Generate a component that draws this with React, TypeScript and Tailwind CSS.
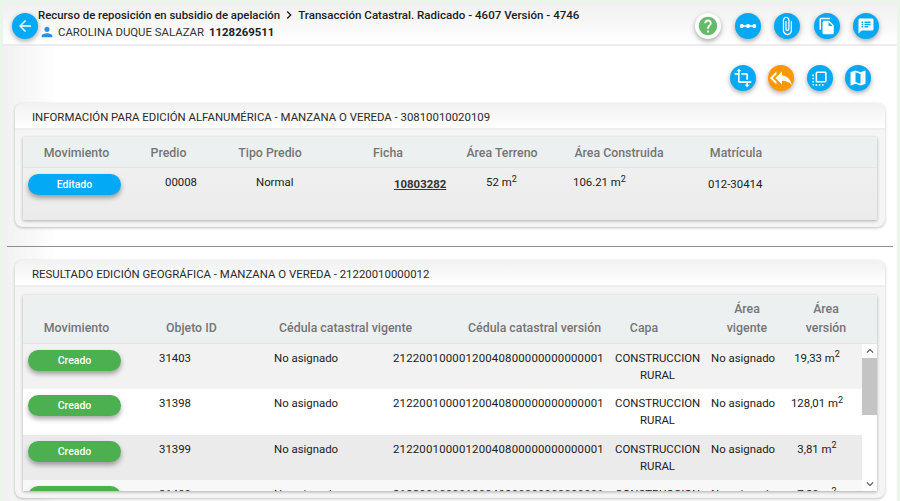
import { MdArrowBack, MdPerson, MdHelp, MdLinearScale, MdAttachFile, MdFileCopy, MdSpeakerNotes, MdTransform, MdReplyAll, MdFlipToFront, MdMap, MdKeyboardArrowUp, MdKeyboardArrowDown, MdChevronRight } from "react-icons/md";
import type { ReactNode } from "react";

function Fab({ children, color = "bg-[#03a9f4]", cls = "" }: { children: ReactNode; color?: string; cls?: string }) {
  return (
    <div className={`flex h-[26px] w-[26px] shrink-0 items-center justify-center rounded-full text-white shadow-[0_2px_5px_rgba(0,0,0,0.35)] ${color} ${cls}`}>
      {children}
    </div>
  );
}

function Badge({ label, color }: { label: string; color: string }) {
  return (
    <div className={`flex h-[21px] w-[93px] items-center justify-center rounded-full text-[10.5px] font-medium text-white shadow-[0_3px_5px_rgba(0,0,0,0.35)] ${color}`}>
      {label}
    </div>
  );
}

function M2({ v }: { v: string }) {
  return (
    <span>
      {v} m<sup className="text-[9px]">2</sup>
    </span>
  );
}

const rows = [
  { id: "31403", area: "19,33", bg: "bg-[#f2f2f2]" },
  { id: "31398", area: "128,01", bg: "bg-white" },
  { id: "31399", area: "3,81", bg: "bg-[#ebebeb]" },
  { id: "31400", area: "7,20", bg: "bg-[#f8f8f8]" },
];

export default function App() {
  return (
    <div className="h-[501px] w-[900px] overflow-hidden bg-[#eaf6ea] pl-[3px] pr-[3px] pt-[2px] font-['Roboto',sans-serif] text-[11.4px] text-[#212121]">
      <div className="h-[499px] rounded-t-[4px] bg-gradient-to-r from-[#f1f1f1] via-white via-[6%] to-white">
        {/* Top bar */}
        <div className="flex h-[44px] items-center border-b-2 border-[#ececec] bg-gradient-to-b from-[#f0f0f0] to-white pl-[9px] pr-[18px]">
          <Fab cls="mt-[5px]"><MdArrowBack size={18} /></Fab>
          <div className="ml-0 flex-1">
            <div className="mt-[1px] flex h-[14px] items-center font-medium leading-[14px] text-[#1c1c1c]">
              Recurso de reposición en subsidio de apelación
              <MdChevronRight size={16} className="mx-px" />
              <span className="text-[11.55px]">Transacción Catastral. Radicado - 4607 Versión - 4746</span>
            </div>
            <div className="mt-[3px] flex h-[14px] items-center pl-[1px] leading-[14px] text-[#333]">
              <MdPerson size={16} className="mr-[3px] text-[#2f8fdc]" />
              CAROLINA DUQUE SALAZAR
              <b className="ml-[5px] font-bold text-[#212121]">1128269511</b>
            </div>
          </div>
          <div className="mt-[6px] flex gap-[13.4px]">
            <Fab color="bg-white"><MdHelp size={22} className="text-[#66bb6a]" /></Fab>
            <Fab><MdLinearScale size={20} /></Fab>
            <Fab><MdAttachFile size={20} /></Fab>
            <Fab><MdFileCopy size={18} /></Fab>
            <Fab><MdSpeakerNotes size={18} /></Fab>
          </div>
        </div>

        {/* Second actions */}
        <div className="flex h-[57px] items-center justify-end gap-[12.5px] pr-[26px] pt-[7px]">
          <Fab><MdTransform size={20} /></Fab>
          <Fab color="bg-[#ff9800]"><MdReplyAll size={22} /></Fab>
          <Fab><MdFlipToFront size={19} /></Fab>
          <Fab><MdMap size={20} /></Fab>
        </div>

        {/* Panel 1 */}
        <section className="mx-[12px] h-[124px] rounded-[8px] bg-[#f5f5f5] shadow-[0_1px_3px_rgba(0,0,0,0.25)]">
          <div className="flex h-[27px] items-center rounded-t-[8px] border-b-2 border-[#eeeeee] bg-gradient-to-b from-[#f1f1f1] to-white pl-[17px] pt-[5px] text-[#2a2a2a]">
            INFORMACIÓN PARA EDICIÓN ALFANUMÉRICA - MANZANA O VEREDA - 30810010020109
          </div>
          <div className="mx-[8px] mt-[7px] h-[83px] bg-gradient-to-b from-[#f3f3f3] to-[#ebebeb] shadow-[0_1px_3px_rgba(0,0,0,0.3)]">
            <div className="grid h-[31px] grid-cols-[107px_77px_126px_110px_118px_116px_118px] items-center border-b border-[#e4e4e4] bg-[#edf0f1] pt-[3px] text-center text-[12.35px] font-medium text-[#757575]">
              <div>Movimiento</div>
              <div>Predio</div>
              <div>Tipo Predio</div>
              <div>Ficha</div>
              <div>Área Terreno</div>
              <div>Área Construida</div>
              <div>Matrícula</div>
            </div>
            <div className="grid grid-cols-[142px_91px_138px_92px_87px_135px_100px] pt-[6px]">
              <div className="pl-[5px]"><Badge label="Editado" color="bg-[#03a9f4]" /></div>
              <div>00008</div>
              <div>Normal</div>
              <div className="pt-[2px] font-bold text-[#333] underline">10803282</div>
              <div><M2 v="52" /></div>
              <div><M2 v="106.21" /></div>
              <div className="pt-[2px]">012-30414</div>
            </div>
          </div>
        </section>

        <div className="mx-[4px] mt-[19px] h-px bg-[#8f8f8f]" />

        {/* Panel 2 */}
        <section className="mx-[12px] mt-[13px] h-[238px] rounded-[8px] bg-[#f5f5f5] shadow-[0_1px_3px_rgba(0,0,0,0.25)]">
          <div className="flex h-[27px] items-center rounded-t-[8px] border-b-2 border-[#eeeeee] bg-gradient-to-b from-[#f1f1f1] to-white pl-[17px] pt-[5px] text-[#2a2a2a]">
            RESULTADO EDICIÓN GEOGRÁFICA - MANZANA O VEREDA - 21220010000012
          </div>
          <div className="mx-[8px] mt-[8px] h-[196px] overflow-hidden bg-white shadow-[0_1px_3px_rgba(0,0,0,0.3)]">
            <div className="flex h-[48.5px] items-end border-b border-[#e4e4e4] bg-[#edf0f1] pb-[5px] text-[12.35px] font-medium leading-[19px] text-[#757575]">
              <div className="w-[107px] shrink-0 text-center">Movimiento</div>
              <div className="w-[92px] shrink-0 pl-[36px]">Objeto ID</div>
              <div className="w-[189px] shrink-0 whitespace-nowrap pl-[57px]">Cédula catastral vigente</div>
              <div className="w-[203px] shrink-0 whitespace-nowrap pl-[57px]">Cédula catastral versión</div>
              <div className="w-[60px] shrink-0 text-center">Capa</div>
              <div className="ml-[23px] w-[100px] shrink-0 text-center">Área<br />vigente</div>
              <div className="w-[58px] shrink-0 text-center">Área<br />versión</div>
            </div>
            <div className="flex h-[147.5px]">
              <div className="w-[839px] overflow-hidden">
                {rows.map((r) => (
                  <div key={r.id} className={`grid h-[45.67px] grid-cols-[136px_115px_119px_222px_96px_75px_62px] pt-[6px] leading-[17px] ${r.bg}`}>
                    <div className="pl-[5px]"><Badge label="Creado" color="bg-[#4caf50]" /></div>
                    <div>{r.id}</div>
                    <div>No asignado</div>
                    <div className="whitespace-nowrap tracking-[0.19px]">21220010000120040800000000000001</div>
                    <div className="whitespace-nowrap pr-[11px] text-center">CONSTRUCCION<br />RURAL</div>
                    <div>No asignado</div>
                    <div className="text-center"><M2 v={r.area} /></div>
                  </div>
                ))}
              </div>
              <div className="flex w-[15px] flex-col items-center bg-white">
                <MdKeyboardArrowUp size={14} className="text-[#505050]" />
                <div className="h-[57px] w-full bg-[#c4c4c4]" />
                <div className="flex-1" />
                <MdKeyboardArrowDown size={14} className="text-[#505050]" />
              </div>
            </div>
          </div>
        </section>
      </div>
    </div>
  );
}
